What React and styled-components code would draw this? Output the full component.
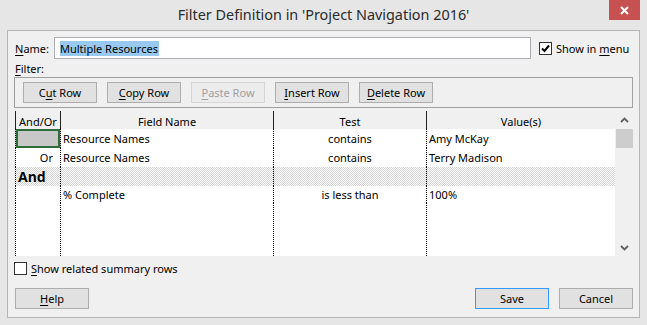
import React from "react";
import styled, { createGlobalStyle, css } from "styled-components";

const GlobalStyle = createGlobalStyle`
  html, body {
    margin: 0;
    padding: 0;
    background: #e6e6e6;
  }
  body {
    font-family: "Segoe UI", "Noto Sans", sans-serif;
    font-size: 11px;
    color: #000;
  }
`;

const Window = styled.div`
  width: 647px;
  height: 325px;
  box-sizing: border-box;
  background: #e6e6e6;
  display: flex;
  flex-direction: column;
`;

const TitleBar = styled.div`
  height: 30px;
  display: grid;
  grid-template-columns: 38px 1fr 38px;
`;

const Title = styled.div`
  grid-column: 2;
  align-self: center;
  text-align: center;
  font-size: 14.4px;
  color: #2b2b2b;
  line-height: 20px;
`;

const CloseButton = styled.div`
  width: 31px;
  height: 20px;
  background: #c75050;
  display: flex;
  align-items: center;
  justify-content: center;
`;

const Client = styled.div`
  flex: 1;
  margin: 0 7px 7px 7px;
  border: 1px solid #b5b5b5;
  background: #f0f0f0;
  padding: 6px 6px 8px 6px;
  display: flex;
  flex-direction: column;
`;

const Key = styled.span`
  text-decoration: underline;
  text-underline-offset: 2px;
`;

const NameRow = styled.div`
  height: 22px;
  display: flex;
  align-items: center;
`;

const FieldLabel = styled.div`
  width: ${(p) => p.$width || "auto"};
  padding-left: 1px;
  box-sizing: border-box;
  line-height: 15px;
  margin-top: ${(p) => p.$top || 0};
`;

const NameInput = styled.div`
  width: 477px;
  height: 22px;
  box-sizing: border-box;
  border: 1px solid #abadb3;
  background: #fff;
  padding-left: 5px;
  display: flex;
  align-items: center;
`;

const Selected = styled.span`
  background: #99c9ef;
  line-height: 15px;
  padding-right: 1px;
`;

const CheckRow = styled.label`
  display: flex;
  align-items: center;
  gap: 4px;
  line-height: 15px;
  margin-left: ${(p) => p.$left || 0};
  margin-top: ${(p) => p.$top || 0};
`;

const Box = styled.span`
  width: 13px;
  height: 13px;
  box-sizing: border-box;
  border: 1px solid #333;
  background: #fff;
  display: flex;
  align-items: center;
  justify-content: center;
`;

const ToolGroup = styled.div`
  margin-top: 1px;
  height: 31px;
  box-sizing: border-box;
  border: 1px solid #a0a0a0;
  padding: 4px 8px;
  display: flex;
  gap: 10px;
`;

const Button = styled.div`
  width: 74px;
  height: 21px;
  box-sizing: border-box;
  border: 1px solid #adadad;
  background: #e1e1e1;
  display: flex;
  align-items: center;
  justify-content: center;
  line-height: 15px;
  ${(p) =>
    p.$disabled &&
    css`
      background: #ececec;
      border-color: #d5d5d5;
      color: #a0a0a0;
    `}
  ${(p) =>
    p.$default &&
    css`
      border-color: #3399ff;
    `}
`;

const Grid = styled.div`
  margin: 3px 0 0 1px;
  height: 145px;
  display: flex;
`;

const Table = styled.div`
  flex: 1;
  display: grid;
  grid-template-columns: 46px 213px 153px 188px;
  grid-template-rows: 18px 19px 19px 19px 17px 1fr;
`;

const HeadCell = styled.div`
  background: #f0f0f0;
  border-right: ${(p) => (p.$last ? "none" : "1px solid #222")};
  border-left: ${(p) => (p.$first ? "1px solid #222" : "none")};
  text-align: center;
  line-height: 17px;
  padding-top: 2px;
  white-space: nowrap;
`;

const Cell = styled.div`
  background: ${(p) => (p.$selected ? "#c8c8c8" : "#fff")};
  border-right: ${(p) => (p.$last ? "none" : "1px dotted #000")};
  border-left: ${(p) => (p.$first ? "1px dotted #000" : "none")};
  padding: 0 ${(p) => (p.$align === "right" ? "7px" : "2px")};
  display: flex;
  align-items: center;
  justify-content: ${(p) =>
    p.$align === "right" ? "flex-end" : p.$align === "center" ? "center" : "flex-start"};
  white-space: nowrap;
  overflow: hidden;
  ${(p) =>
    p.$selected &&
    css`
      box-shadow: inset 0 0 0 2px #2d6e3a;
    `}
  ${(p) =>
    p.$pattern &&
    css`
      background-color: #fff;
      background-image: repeating-conic-gradient(#d2d2d2 0 25%, #fff 0 50%);
      background-size: 2px 2px;
    `}
`;

const AndText = styled.span`
  font-weight: bold;
  font-size: 14px;
  text-shadow: 0 0 1px #fff, 0 0 2px #fff;
`;

const Scrollbar = styled.div`
  width: 17px;
  background: #f0f0f0;
  display: flex;
  flex-direction: column;
`;

const Arrow = styled.div`
  height: 17px;
  display: flex;
  align-items: center;
  justify-content: center;
`;

const Thumb = styled.div`
  margin-top: 1px;
  height: 19px;
  background: #cdcdcd;
`;

const Track = styled.div`
  flex: 1;
`;

const Footer = styled.div`
  margin: 12px 0 0 1px;
  display: flex;
  justify-content: space-between;
`;

const ButtonGroup = styled.div`
  display: flex;
  gap: 10px;
`;

const Chevron = ({ up }) => (
  <svg width="9" height="6" viewBox="0 0 9 6">
    <path
      d={up ? "M1 5 L4.5 1.5 L8 5" : "M1 1 L4.5 4.5 L8 1"}
      fill="none"
      stroke="#606060"
      strokeWidth="1.8"
    />
  </svg>
);

const rows = [
  { andOr: "", field: "Resource Names", test: "contains", value: "Amy McKay", selected: true },
  { andOr: "Or", field: "Resource Names", test: "contains", value: "Terry Madison" },
  { and: true },
  { andOr: "", field: "% Complete", test: "is less than", value: "100%" },
];

export default function App() {
  return (
    <>
      <GlobalStyle />
      <Window>
        <TitleBar>
          <Title>Filter Definition in 'Project Navigation 2016'</Title>
          <CloseButton>
            <svg width="9" height="9" viewBox="0 0 9 9">
              <path d="M1 1 L8 8 M8 1 L1 8" stroke="#fff" strokeWidth="2" />
            </svg>
          </CloseButton>
        </TitleBar>
        <Client>
          <NameRow>
            <FieldLabel $width="40px">
              <Key>N</Key>ame:
            </FieldLabel>
            <NameInput>
              <Selected>Multiple Resources</Selected>
            </NameInput>
            <CheckRow $left="8px">
              <Box>
                <svg width="9" height="9" viewBox="0 0 9 9">
                  <path d="M1 4.5 L3.5 7 L8 1.5" fill="none" stroke="#000" strokeWidth="2" />
                </svg>
              </Box>
              <span>
                Show in <Key>m</Key>enu
              </span>
            </CheckRow>
          </NameRow>
          <FieldLabel $top="2px">
            <Key>F</Key>ilter:
          </FieldLabel>
          <ToolGroup>
            <Button>
              C<Key>u</Key>t Row
            </Button>
            <Button>
              <Key>C</Key>opy Row
            </Button>
            <Button $disabled>
              <Key>P</Key>aste Row
            </Button>
            <Button>
              <Key>I</Key>nsert Row
            </Button>
            <Button>
              <Key>D</Key>elete Row
            </Button>
          </ToolGroup>
          <Grid>
            <Table>
              <HeadCell $first>And/Or</HeadCell>
              <HeadCell>Field Name</HeadCell>
              <HeadCell>Test</HeadCell>
              <HeadCell $last>Value(s)</HeadCell>
              {rows.map((r, i) =>
                r.and ? (
                  <React.Fragment key={i}>
                    <Cell $first $pattern>
                      <AndText>And</AndText>
                    </Cell>
                    <Cell $pattern />
                    <Cell $pattern />
                    <Cell $pattern $last />
                  </React.Fragment>
                ) : (
                  <React.Fragment key={i}>
                    <Cell $first $align="right" $selected={r.selected}>
                      {r.andOr}
                    </Cell>
                    <Cell>{r.field}</Cell>
                    <Cell $align="center">{r.test}</Cell>
                    <Cell $last>{r.value}</Cell>
                  </React.Fragment>
                )
              )}
              <Cell $first />
              <Cell />
              <Cell />
              <Cell $last />
            </Table>
            <Scrollbar>
              <Arrow>
                <Chevron up />
              </Arrow>
              <Thumb />
              <Track />
              <Arrow>
                <Chevron />
              </Arrow>
            </Scrollbar>
          </Grid>
          <CheckRow $top="5px">
            <Box />
            <span>
              <Key>S</Key>how related summary rows
            </span>
          </CheckRow>
          <Footer>
            <Button>
              <Key>H</Key>elp
            </Button>
            <ButtonGroup>
              <Button $default>Save</Button>
              <Button>Cancel</Button>
            </ButtonGroup>
          </Footer>
        </Client>
      </Window>
    </>
  );
}
